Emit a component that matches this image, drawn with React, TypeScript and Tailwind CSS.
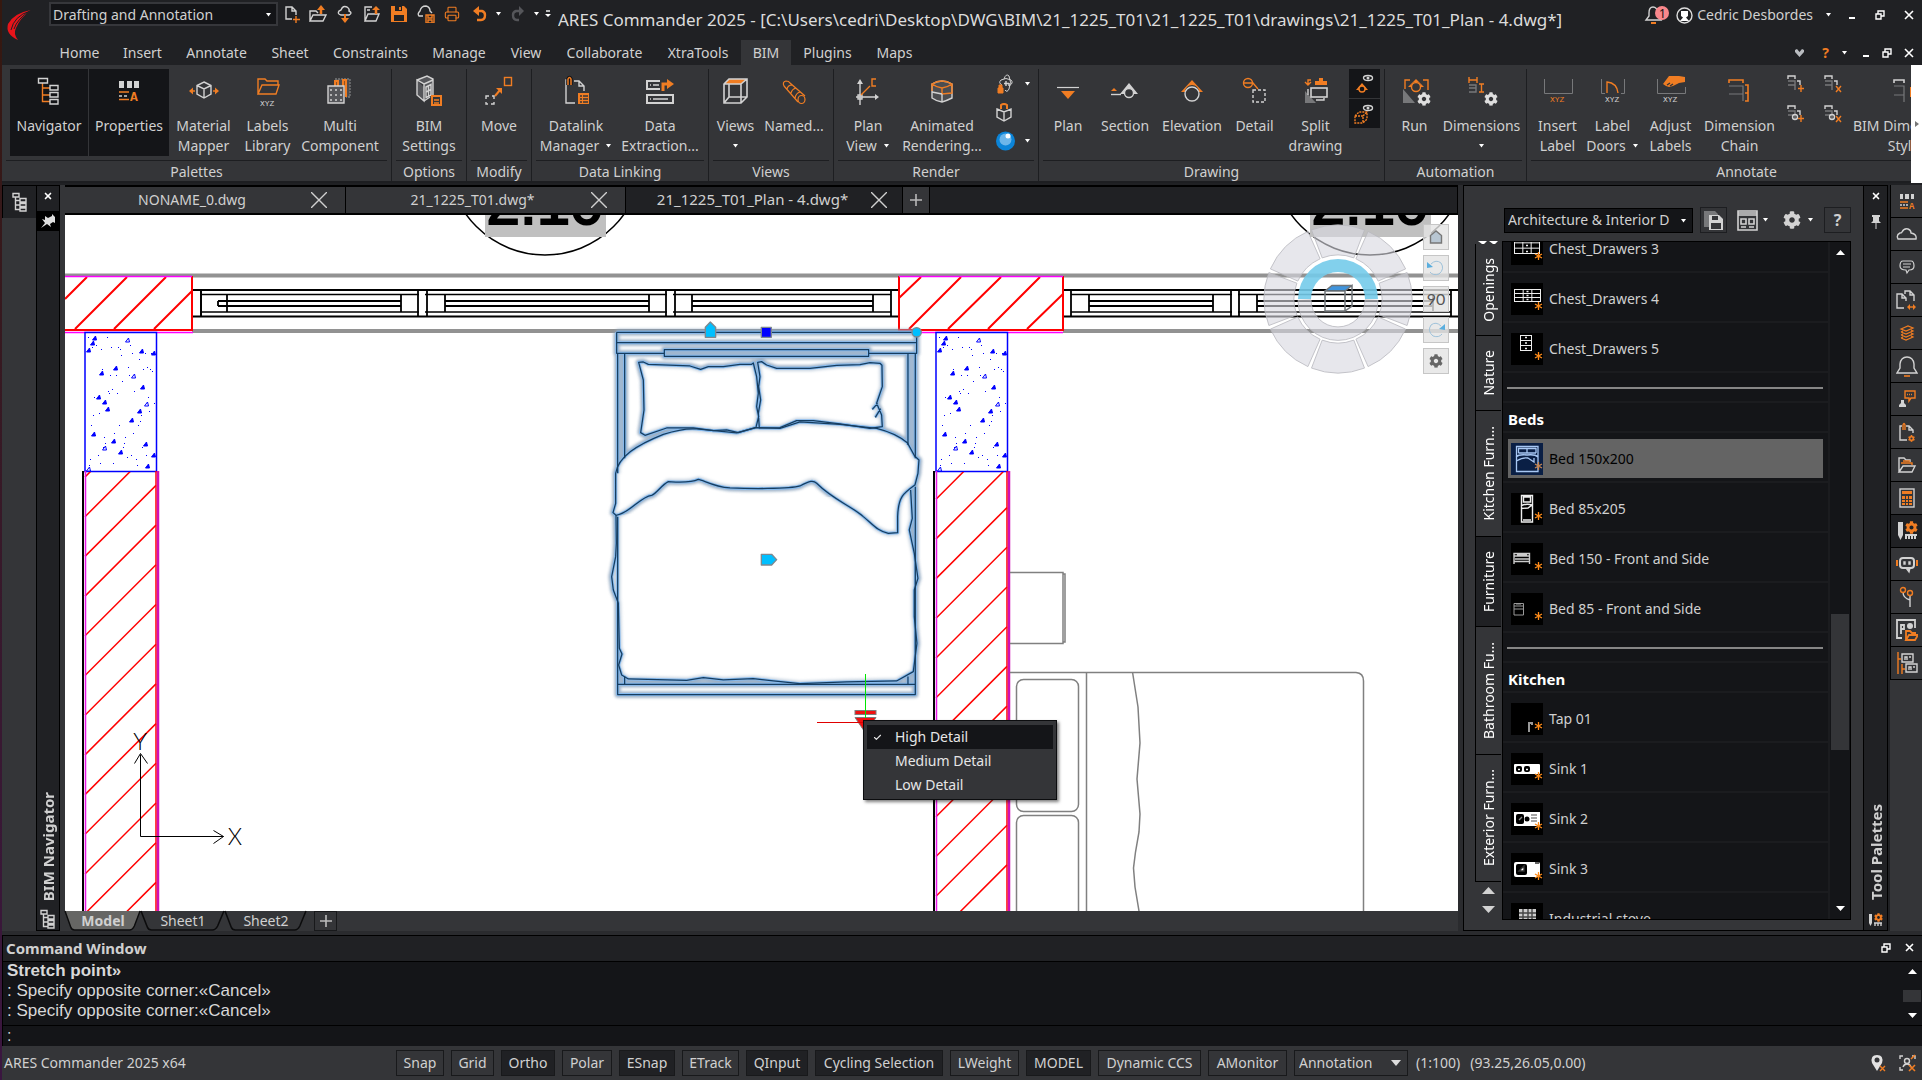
import type { ReactNode } from "react";
import { Check, Printer, X } from "lucide-react";
import { FaCog } from "react-icons/fa";

const OR = "#f07d23";
const LG = "#d2d2d2";
const DG = "#77787a";

interface SvgProps {
    children: ReactNode;
    w?: number;
    h?: number;
    className?: string;
}

function Svg({ children, w = 32, h = 32, className = "" }: SvgProps) {
    return (
        <svg width={w} height={h} viewBox={`0 0 ${w} ${h}`} fill="none" strokeWidth={1.4} className={`shrink-0 ${className}`} aria-hidden="true">
            {children}
        </svg>
    );
}

function Caret() {
    return (
        <Svg w={7} h={4}>
            <path d="M1 0H6L3.5 3.500Z" fill="#fff" />
        </Svg>
    );
}

/* ---------- ribbon icons ---------- */

const navigatorIcon = (
    <Svg>
        <path d="M9.500 8V26.500H17M9.500 13H17M9.500 20H17" stroke={OR} />
        <path d="M5.500 3.500H14.500V8H5.500ZM17 10.500H25V15H17ZM17 17.500H25V22H17ZM17 24.500H25V29H17Z" stroke={LG} />
    </Svg>
);

const propertiesIcon = (
    <Svg>
        <path d="M6 6H11V13H6ZM14 6H19V13H14ZM21 6H26V13H21Z" fill={LG} />
        <path d="M6 17H16M6 24.5H16" stroke={OR} />
        <path d="M6 21H16" stroke={LG} strokeDasharray="3 2" />
        <text x="17" y="26" fill={OR} fontSize="13" fontWeight="700" fontFamily="Liberation Mono">A</text>
    </Svg>
);

const materialIcon = (
    <Svg>
        <path d="M16 7L23 10.5V19L16 23L9 19V10.5ZM9 10.5L16 14L23 10.5M16 14V23" stroke={LG} />
        <path d="M7 16H3M25 16H29" stroke={OR} strokeWidth={1.6} />
        <path d="M5 12.500V19.500L1 16ZM27 12.500V19.500L31 16Z" fill={OR} />
    </Svg>
);

const labelsIcon = (
    <Svg>
        <path d="M6 19V4H13L15 6H26V10M6 19L10 10H27L24 19Z" stroke={OR} />
        <text x="8" y="31" fill={LG} fontSize="8" fontFamily="Liberation Mono">XYZ</text>
    </Svg>
);

const multiIcon = (
    <Svg>
        <path d="M11 4H26V22H22" stroke={DG} fill="#4b4c4f" strokeDasharray="2 1" />
        <path d="M11 11V6H14V11M19 11V5H22V22" stroke={OR} fill="#8d5427" strokeWidth={2} />
        <path d="M4 11H20V28H4Z" fill="#55565a" stroke={LG} />
        <path d="M6 15H19M6 20H19M6 25H19" stroke={LG} strokeDasharray="2 3" />
    </Svg>
);

const bimIcon = (
    <Svg>
        <path d="M4 5L14 1L20 4V22M4 5V20L11 26V9ZM11 9L20 5M11 26L17 22" stroke={LG} fill="#55565a" />
        <path d="M13 12L18 9.500V20L13 22.500ZM15.500 11V21M13 17L18 14.500" stroke={LG} />
        <rect x="19" y="21" width="9" height="9" stroke={OR} strokeWidth={2} fill="#343538" />
        <path d="M21 25H26M21 28H26" stroke={OR} />
    </Svg>
);

const moveIcon = (
    <Svg>
        <rect x="21.500" y="2.500" width="7" height="8" stroke={OR} />
        <path d="M12 21L17 15" stroke={OR} strokeWidth={2} />
        <path d="M13 13H19V19Z" fill={OR} />
        <path d="M3 24V21H6M9 21H11V24M11 27V29H8M5 29H3V27" stroke={LG} />
    </Svg>
);

const datalinkIcon = (
    <Svg>
        <path d="M10 6V5H6V28H15M14 6H19L24 11V16M19 6V11H24" stroke={LG} />
        <path d="M8 10V4Q9.500 1 11 4V10" stroke="#141518" strokeWidth={3.5} />
        <path d="M8 10V4Q9.500 1 11 4V10" stroke={OR} strokeWidth={1.5} />
        <path d="M18 18H29V29H18Z" fill={OR} />
        <path d="M20 21H22M23 21H28M20 24H22M23 24H28M20 27H22M23 27H28" stroke="#343538" />
    </Svg>
);

const extractionIcon = (
    <Svg>
        <path d="M16 6H3V14H16M3 20H29V28H3Z" stroke={LG} strokeWidth={2} />
        <path d="M6 10H7M9 10H15M6 24H7M9 24H24" stroke={LG} />
        <path d="M19 16V9H24" stroke={OR} strokeWidth={3} />
        <path d="M23 4L30 9L23 14Z" fill={OR} />
    </Svg>
);

const viewsIcon = (
    <Svg>
        <path d="M4 9L9 4H27L21 9Z" fill={OR} />
        <path d="M4 9L9 4H27V22L21 28H4ZM4 9H21V28M21 9L27 4M9 9V22H27M9 22L4 28" stroke={LG} strokeWidth={1.6} />
    </Svg>
);

const namedIcon = (
    <Svg>
        <path d="M6 11Q4 7 8 6Q11 6 12 8L27 21M6 11L20 27M9 14Q10 10 14 10M13 18Q14 14 18 13M17 23Q18 18 22 17" stroke={OR} strokeWidth={1.2} />
        <ellipse cx="23.500" cy="24.500" rx="3.500" ry="4" stroke={OR} strokeWidth={1.200} />
    </Svg>
);

const planViewIcon = (
    <Svg>
        <path d="M8 26V8M4 22H23M6 20H10V24H6ZM8 26V30" stroke={LG} />
        <path d="M5 9L8 4L11 9ZM23 19V25L27 22Z" fill={LG} />
        <path d="M9 20L18 11M24 4H20V11H24" stroke={OR} />
    </Svg>
);

const animatedIcon = (
    <Svg>
        <path d="M6 9Q16 3 26 9V23Q20 26 16 27Q10 26 6 23Z" stroke={LG} fill="#4c4d50" />
        <path d="M6 9Q16 3 26 9V18L16 19V13Q10 12 6 9ZM16 13Q22 12 26 9M6 9V16" stroke={OR} />
        <path d="M16 19V27M6 17L16 19" stroke={LG} />
    </Svg>
);

const planIcon = (
    <Svg>
        <path d="M5 12.5H27" stroke={LG} strokeWidth={1.2} />
        <path d="M9 16H23L16 24Z" fill={OR} />
    </Svg>
);

const sectionIcon = (
    <Svg>
        <path d="M2 16H8L5 13Z" fill={OR} />
        <path d="M2 19.500H12" stroke={LG} />
        <path d="M11 19L20 8L29 19H25A5 5 0 0 0 15 19Z" fill={LG} />
        <circle cx="20" cy="18" r="4.5" stroke={LG} fill="#343538" />
    </Svg>
);

const elevationIcon = (
    <Svg>
        <path d="M5 17L16 5L27 17H23A7 7 0 0 0 9 17Z" fill={OR} />
        <circle cx="16" cy="19" r="7" stroke={LG} fill="#343538" />
    </Svg>
);

const detailIcon = (
    <Svg>
        <circle cx="9" cy="8" r="4.5" stroke={OR} />
        <path d="M5 8H14L19 14" stroke={OR} />
        <rect x="14" y="15" width="12" height="12" stroke={LG} strokeDasharray="3 2" />
    </Svg>
);

const splitIcon = (
    <Svg>
        <path d="M14 6H19V3H23V6H27V10H15V6Z" fill={OR} />
        <path d="M11 5H8V9M5 7L8 10L11 7" stroke={OR} />
        <path d="M5 28V16L16 28Z" fill={DG} />
        <rect x="11" y="13" width="16" height="9" stroke={LG} strokeWidth={1.6} fill="#343538" />
        <path d="M8 14V20M16 25H24V23" stroke={LG} />
    </Svg>
);

const runIcon = (
    <Svg>
        <path d="M6 14V5H11M24 5H29V15" stroke={OR} />
        <path d="M9 12L17 4L25 12H22A5 5 0 0 0 12 12Z" fill={OR} />
        <circle cx="17" cy="12" r="4.5" stroke={OR} fill="#343538" />
        <path d="M4 28V14L16 28Z" fill={DG} />
        <FaCog x={18} y={17} size={14} color="#dedede" />
    </Svg>
);

const dimensionsIcon = (
    <Svg>
        <path d="M3 2V8M11 2V8M3 5H11M13 9H18M13 17H18M15.500 9V17" stroke={OR} />
        <path d="M3 10H10V17H3M3 13H10" stroke={DG} />
        <FaCog x={18} y={17} size={14} color="#dedede" />
    </Svg>
);

const insertLabelIcon = (
    <Svg>
        <path d="M2.500 4V18.500H30.500V4" stroke={DG} strokeWidth={1} />
        <text x="8" y="27" fill={OR} fontSize="8" fontFamily="Liberation Mono">XYZ</text>
    </Svg>
);

const labelDoorsIcon = (
    <Svg>
        <path d="M4.500 4V18.500H8M24 18.500H27.500V4" stroke={DG} strokeWidth={1} />
        <path d="M10 18V7Q20 8 21 18" stroke={OR} />
        <text x="8" y="27" fill={LG} fontSize="8" fontFamily="Liberation Mono">XYZ</text>
    </Svg>
);

const adjustIcon = (
    <Svg>
        <path d="M2.500 4V18.500H30.500V12" stroke={DG} strokeWidth={1} />
        <path d="M8 9L14 1H24L30 2V7L24 8L18 11L14 12L11 11Z" fill={OR} />
        <path d="M12 10L15 8M15 11L18 9" stroke="#343538" />
        <text x="8" y="27" fill={LG} fontSize="8" fontFamily="Liberation Mono">XYZ</text>
    </Svg>
);

const chainIcon = (
    <Svg>
        <path d="M5 8V5H19V8M21 10H24V26H21M21 18H24" stroke={OR} strokeWidth={1.6} />
        <path d="M5 11H19V26M5 19H19" stroke={DG} strokeWidth={1.2} />
    </Svg>
);

const dimStyleIcon = (
    <Svg>
        <path d="M6 8V5H16V8" stroke={LG} strokeWidth={1.6} />
        <path d="M6 11H16V27M6 20H16" stroke={DG} strokeWidth={1.2} />
        <path d="M22 12H26V22H22Z" fill={OR} />
    </Svg>
);

interface Tool {
    label: string[];
    icon: ReactNode;
    width: string;
    active?: boolean;
    caret?: boolean;
}

function RibbonButton({ label, icon, width, active, caret }: Tool) {
    return (
        <button className={`flex h-[87px] shrink-0 flex-col items-center pt-[6px] text-center leading-5 whitespace-nowrap ${width} ${active ? "bg-[#141518]" : ""}`}>
            {icon}
            <span className="mt-[9px]">{label[0]}</span>
            <span className="flex h-5 items-center gap-[6px]">
                {label[1]}
                {caret && <Caret />}
            </span>
        </button>
    );
}

function Group({ title, className = "", children }: { title: string; className?: string; children: ReactNode }) {
    return (
        <section className={`flex shrink-0 flex-col pt-1 ${className}`}>
            <div className="flex h-[112px] flex-col border-r border-[#1d1e21] px-1">
                <div className="flex h-[87px] items-start justify-center">{children}</div>
                <div className="mt-1 border-t border-[#1d1e21] text-center leading-[22px]">{title}</div>
            </div>
        </section>
    );
}

const addDims = (cross: boolean, circle: boolean) => (
    <Svg w={18} h={18}>
        <path d="M1 4V1H8V4M10 6H13V10" stroke={LG} />
        <path d="M1 6H8V15M1 10H8" stroke={DG} />
        {circle && <circle cx="8" cy="12" r="2.500" stroke={LG} />}
        <path d={cross ? "M12 11L17 17M17 11L12 17" : "M14 10V17M11 13.500H17"} stroke={OR} />
    </Svg>
);

const eye = (
    <>
        <ellipse cx="19" cy="9" rx="4.500" ry="2.500" stroke={LG} />
        <circle cx="19" cy="9" r="1.500" fill={LG} />
    </>
);

function Ribbon() {
    return (
        <div className="flex h-[118px] shrink-0">
            <div className="flex min-w-0 flex-1 overflow-hidden border-b-2 border-[#1d1e21] bg-[#343538]">
                <Group title="Palettes" className="w-[390px]">
                    <RibbonButton label={["Navigator"]} icon={navigatorIcon} width="w-[78px] mr-px" active />
                    <RibbonButton label={["Properties"]} icon={propertiesIcon} width="w-[80px]" active />
                    <RibbonButton label={["Material", "Mapper"]} icon={materialIcon} width="w-[69px]" />
                    <RibbonButton label={["Labels", "Library"]} icon={labelsIcon} width="w-[59px]" />
                    <RibbonButton label={["Multi", "Component"]} icon={multiIcon} width="w-[86px]" />
                </Group>
                <Group title="Options" className="w-[75px]">
                    <RibbonButton label={["BIM", "Settings"]} icon={bimIcon} width="w-[67px]" />
                </Group>
                <Group title="Modify" className="w-[65px]">
                    <RibbonButton label={["Move"]} icon={moveIcon} width="w-[60px]" />
                </Group>
                <Group title="Data Linking" className="w-[177px]">
                    <RibbonButton label={["Datalink", "Manager"]} icon={datalinkIcon} width="w-[80px]" caret />
                    <RibbonButton label={["Data", "Extraction..."]} icon={extractionIcon} width="w-[88px]" />
                </Group>
                <Group title="Views" className="w-[125px]">
                    <RibbonButton label={["Views"]} icon={viewsIcon} width="w-[46px]" caret />
                    <RibbonButton label={["Named..."]} icon={namedIcon} width="w-[71px]" />
                </Group>
                <Group title="Render" className="w-[205px]">
                    <RibbonButton label={["Plan", "View"]} icon={planViewIcon} width="w-[60px]" caret />
                    <RibbonButton label={["Animated", "Rendering..."]} icon={animatedIcon} width="w-[88px]" />
                    <div className="flex w-[48px] flex-col gap-2 pt-1 pl-[10px]">
                        <button className="flex items-center gap-2" aria-label="Orbit">
                            <Svg w={20} h={22}>
                                <path d="M6 12Q2 10 5 7Q10 4 15 7Q18 10 13 13M8 6Q10 0 13 3Q16 9 13 16Q11 20 9 17" stroke={LG} strokeWidth={1} />
                                <path d="M10 8V13M8 10.500H13M13 10V13" stroke={LG} />
                                <path d="M2 15H7V20H2ZM3 15V12H6V15" fill={OR} stroke={OR} strokeWidth={1} />
                            </Svg>
                            <Caret />
                        </button>
                        <button aria-label="Box">
                            <Svg w={20} h={20}>
                                <path d="M1 6L8 9L15 6V14L8 18L1 14ZM8 9V18" stroke={LG} />
                                <path d="M5 6V2Q8 0 11 2V6" stroke={OR} strokeWidth={2} />
                            </Svg>
                        </button>
                        <button className="flex items-center gap-2" aria-label="Render">
                            <Svg w={20} h={20}>
                                <circle cx="9.500" cy="10" r="9.500" fill="#0b84d8" />
                                <circle cx="9.500" cy="8.500" r="6" fill="#6cb6ea" />
                                <circle cx="12" cy="5" r="2.500" fill="#fff" />
                            </Svg>
                            <Caret />
                        </button>
                    </div>
                </Group>
                <Group title="Drawing" className="w-[346px]">
                    <RibbonButton label={["Plan"]} icon={planIcon} width="w-[50px]" />
                    <RibbonButton label={["Section"]} icon={sectionIcon} width="w-[64px]" />
                    <RibbonButton label={["Elevation"]} icon={elevationIcon} width="w-[70px]" />
                    <RibbonButton label={["Detail"]} icon={detailIcon} width="w-[55px]" />
                    <RibbonButton label={["Split", "drawing"]} icon={splitIcon} width="w-[67px]" />
                    <div className="flex flex-col gap-px">
                        <button className="bg-[#141518]" aria-label="Show marks">
                            <Svg w={31} h={29}>
                                {eye}
                                <path d="M7 21L13 14L19 21H16A3 3 0 0 0 10 21Z" fill={OR} />
                                <circle cx="13" cy="20" r="3" stroke={OR} fill="#141518" />
                            </Svg>
                        </button>
                        <button className="bg-[#141518]" aria-label="Show boxes">
                            <Svg w={31} h={29}>
                                {eye}
                                <path d="M6 17L10 13H18V20L14 24H6ZM6 17H14V24M14 17L18 13" stroke={OR} strokeDasharray="2 1" />
                            </Svg>
                        </button>
                    </div>
                </Group>
                <Group title="Automation" className="w-[142px]">
                    <RibbonButton label={["Run"]} icon={runIcon} width="w-[52px]" />
                    <RibbonButton label={["Dimensions"]} icon={dimensionsIcon} width="w-[82px]" caret />
                </Group>
                <Group title="Annotate" className="w-[440px]">
                    <RibbonButton label={["Insert", "Label"]} icon={insertLabelIcon} width="w-[50px]" />
                    <RibbonButton label={["Label", "Doors"]} icon={labelDoorsIcon} width="w-[60px]" caret />
                    <RibbonButton label={["Adjust", "Labels"]} icon={adjustIcon} width="w-[56px]" />
                    <RibbonButton label={["Dimension", "Chain"]} icon={chainIcon} width="w-[82px]" />
                    <div className="grid w-[66px] grid-cols-2 gap-x-[14px] gap-y-3 pt-[6px] pl-[6px]">
                        <button aria-label="Add dimension">{addDims(false, false)}</button>
                        <button aria-label="Remove dimension">{addDims(true, false)}</button>
                        <button aria-label="Add point">{addDims(false, true)}</button>
                        <button aria-label="Remove point">{addDims(true, true)}</button>
                    </div>
                    <RibbonButton label={["BIM Dimension", "Style"]} icon={dimStyleIcon} width="w-[114px]" />
                </Group>
            </div>
            <button className="flex w-[11px] items-center justify-center bg-white" aria-label="More">
                <Svg w={4} h={6}>
                    <path d="M0 0L4 3L0 6Z" fill="#777" />
                </Svg>
            </button>
        </div>
    );
}

/* ---------- title bar ---------- */

function WindowButtons({ gap }: { gap: string }) {
    return (
        <div className={`flex items-center ${gap}`}>
            <button aria-label="Minimize">
                <Svg w={8} h={12}><path d="M1 9H7" stroke="#fff" strokeWidth={2} /></Svg>
            </button>
            <button aria-label="Restore">
                <Svg w={10} h={10}><path d="M1 4H6V9H1ZM3 4V1H9V6H6" stroke="#fff" /></Svg>
            </button>
            <button aria-label="Close">
                <Svg w={10} h={10}><path d="M1 1L9 9M9 1L1 9" stroke="#fff" strokeWidth={1.6} /></Svg>
            </button>
        </div>
    );
}

const menus = [
    { name: "Home", width: "w-[63px]" },
    { name: "Insert", width: "w-[63px]" },
    { name: "Annotate", width: "w-[85px]" },
    { name: "Sheet", width: "w-[62px]" },
    { name: "Constraints", width: "w-[99px]" },
    { name: "Manage", width: "w-[78px]" },
    { name: "View", width: "w-[56px]" },
    { name: "Collaborate", width: "w-[101px]" },
    { name: "XtraTools", width: "w-[86px]" },
    { name: "BIM", width: "w-[50px]" },
    { name: "Plugins", width: "w-[73px]" },
    { name: "Maps", width: "w-[61px]" },
];

function TitleBar() {
    return (
        <header className="flex h-[65px] shrink-0">
            <Svg w={46} h={48}>
                <path d="M29 10Q12 13 6 24Q3 34 16 40Q11 34 14 28Q18 18 29 10Z" fill="#e8141a" />
                <path d="M29 10Q15 19 12 29M28 11Q12 16 9 30" stroke="#202124" strokeWidth={1} />
            </Svg>
            <div className="flex min-w-0 flex-1 flex-col">
                <div className="flex h-10 items-start pr-2">
                    <div className="relative mt-[2px] ml-px">
                        <select aria-label="Workspace" className="h-6 w-[229px] appearance-none border-2 border-[#36373b] bg-[#131417] pt-px pl-[2px]">
                            <option>Drafting and Annotation</option>
                        </select>
                        <div className="pointer-events-none absolute top-[11px] right-[6px]"><Caret /></div>
                    </div>
                    <div className="mt-[5px] ml-[6px] flex h-[18px] items-center gap-[9px]">
                        <button aria-label="New"><Svg w={16} h={18}><path d="M8 14H2V2H8L12 6V10M8 2V6H12" stroke={LG} /><path d="M12 11V18M9 14.500H16" stroke={OR} /></Svg></button>
                        <button aria-label="Open"><Svg w={18} h={18}><path d="M1 16V6H7L9 8M1 16L4 10H17L14 16Z" stroke={LG} /><path d="M12 9V4" stroke={OR} strokeWidth={2.5} /><path d="M8 5L12 0L16 5Z" fill={OR} /></Svg></button>
                        <button aria-label="Open from cloud"><Svg w={18} h={18}><path d="M5 10Q1 9 3 6Q5 5 5 5Q7 0 11 2Q14 4 13 6Q17 8 13 10Z" stroke={LG} /><path d="M9 9V13" stroke={OR} strokeWidth={2} /><path d="M5 13H13L9 18Z" fill={OR} /></Svg></button>
                        <button aria-label="Publish"><Svg w={18} h={18}><path d="M2 16V2H9M2 16L5 9H16L13 16ZM4 5H7" stroke={LG} /><path d="M13 9V4" stroke={OR} strokeWidth={2.5} /><path d="M9 5L13 1L17 5Z" fill={OR} /></Svg></button>
                        <button aria-label="Save"><Svg w={18} h={18}><path d="M1 1H14L17 4V17H1Z" fill={OR} /><path d="M5 1H12V6H5ZM4 10H14V16H4Z" fill="#202124" /><path d="M10 2V5" stroke={OR} strokeWidth={2} /></Svg></button>
                        <button aria-label="Save to cloud"><Svg w={18} h={18}><path d="M6 11H2Q0 9 3 6Q4 1 9 1Q13 2 13 6L15 8" stroke={LG} /><path d="M9 10H17V18H9Z" stroke={OR} /><path d="M11 10V13H15V10M11 18V15H15V18" stroke={OR} /></Svg></button>
                        <button aria-label="Print"><Printer size={16} color={OR} strokeWidth={1.6} /></button>
                        <button aria-label="Undo" className="ml-1 flex items-center gap-2"><Svg w={14} h={16}><path d="M4 5H9Q12 6 12 9Q12 14 8 14H4" stroke={OR} strokeWidth={2.4} /><path d="M0 5L6 0V10Z" fill={OR} /></Svg><Caret /></button>
                        <button aria-label="Redo" className="flex items-center gap-2"><Svg w={14} h={16}><path d="M9 5H5Q2 6 2 9Q2 14 6 14H8" stroke="#55565a" strokeWidth={2.4} /><path d="M13 5L8 0V10Z" fill="#55565a" /></Svg><Caret /></button>
                        <button aria-label="Customize" className="-ml-1"><Svg w={6} h={8}><path d="M1 1H5" stroke="#fff" /><path d="M0 4H6L3 7Z" fill="#fff" /></Svg></button>
                    </div>
                    <h1 className="ml-[7px] min-w-0 flex-1 truncate text-[17px] leading-10 text-[#dcdcdc]">
                        ARES Commander 2025 - [C:\Users\cedri\Desktop\DWG\BIM\21_1225_T01\21_1225_T01\drawings\21_1225_T01_Plan - 4.dwg*]
                    </h1>
                    <div className="mt-px flex h-7 shrink-0 items-center">
                        <button className="relative mr-1 w-7" aria-label="Notifications">
                            <Svg w={26} h={20}>
                                <path d="M2 15H17L14 11V8Q13 2 9 2Q5 2 5 8V11Z" stroke={LG} />
                                <path d="M7 18H12" stroke={OR} strokeWidth={2} />
                                <circle cx="18" cy="8" r="7" fill="#f9878c" />
                                <text x="15" y="13" fill="#111" fontSize="12">1</text>
                            </Svg>
                        </button>
                        <button className="flex items-center gap-1">
                            <Svg w={17} h={17}>
                                <circle cx="8.500" cy="8.500" r="7.500" stroke="#ddd" />
                                <path d="M5 4H12V9L10 10.500L13 14H4L7 10.500L5 9Z" fill="#fff" />
                            </Svg>
                            Cedric Desbordes
                            <span className="mr-4 ml-2"><Caret /></span>
                        </button>
                        <WindowButtons gap="gap-[19px]" />
                    </div>
                </div>
                <div className="flex h-[25px] items-center pr-2">
                    <nav className="flex h-full flex-1">
                        {menus.map((menu) => (
                            <a key={menu.name} href="#" className={`text-center leading-[26px] ${menu.width} ${menu.name === "BIM" ? "bg-[#343538]" : ""}`}>
                                {menu.name}
                            </a>
                        ))}
                    </nav>
                    <button aria-label="Collapse" className="mr-[18px]"><Svg w={9} h={8}><path d="M0 1L2 0L4.500 3L7 0L9 1V3L4.500 8L0 3Z" fill="#b9bcc0" /></Svg></button>
                    <button aria-label="Help" className="mr-[14px] flex items-center gap-3 font-bold text-[#f07d23]">?<Caret /></button>
                    <WindowButtons gap="gap-3" />
                </div>
            </div>
        </header>
    );
}

/* ---------- drawing area ---------- */

const hatchLeft = Array.from({ length: 13 }, (_, i) => 477 + i * 39.7);
const hatchRight = Array.from({ length: 13 }, (_, i) => 459.5 + i * 39.7);

// aggregate of the concrete fill, relative to the top-left corner of the column
const stones = [
    [9, 7], [7, 12], [3, 19], [42, 9], [56, 20], [68, 22], [30, 37], [16, 42], [48, 45], [57, 56],
    [13, 66], [19, 71], [22, 78], [61, 73], [54, 80], [46, 89], [8, 103], [28, 110], [19, 117], [35, 121],
    [60, 113], [68, 124], [62, 135], [3, 138],
];
const grit = Array.from({ length: 60 }, (_, i) => [3 + ((i * 29) % 67), 4 + ((i * 53 + i * i * 3) % 132)]);

function Column({ x }: { x: number }) {
    return (
        <g>
            <rect x={x} y="332.500" width="71.500" height="139" fill="#fff" stroke="#0000ff" strokeWidth="1.500" />
            {stones.map(([sx, sy], i) => (
                <path key={i} d={`M${x + sx - 1.5} ${332 + sy + 1}h4l-1 -4z`} fill={i % 5 === 3 ? "#fff" : "#0000ff"} stroke="#0000ff" />
            ))}
            {grit.map(([gx, gy], i) => (
                <rect key={i} x={x + gx} y={333 + gy} width="1" height="1" fill="#0000ff" />
            ))}
        </g>
    );
}

function Wall({ x, lines }: { x: number; lines: number[] }) {
    return (
        <g>
            {lines.map((y) => (
                <path key={y} d={`M${x + 2} ${y}l71 -71`} stroke="#ff0000" strokeWidth="1.500" clipPath="url(#walls)" />
            ))}
            <path d={`M${x} 471V911`} stroke="#000" strokeWidth="2" />
            <path d={`M${x + 2.5} 471V911`} stroke="#e818e8" strokeWidth="1.500" />
            <path d={`M${x + 73} 471V911`} stroke="#ff0000" strokeWidth="1.500" />
            <path d={`M${x + 75} 471V911`} stroke="#d010b8" strokeWidth="2.500" />
        </g>
    );
}

// [frame start, sash start, sash end, frame end]
const sashes = [
    [201, 227, 401, 418],
    [427, 445, 649, 666],
    [675, 692, 873, 891],
    [1071, 1089, 1213, 1231],
    [1239, 1257, 1433, 1451],
];

const bedFrame = "M110 397H1010V460H866M253 460H110ZM110 397V460M110 428H1010M253 449H866V469H253ZM113 460V820M134 460V775M984 460V735M1006 460V775M113 950V1484H1006V860M113 1453H1006M134 1430V1453M984 1430V1453";
const bedPillows = "M176 487L190 486L205 493L330 498L362 508L385 500L430 500L480 493L515 493L520 489L530 530L535 580L530 620L536 650L528 682L475 698L440 690L400 692L340 684L260 684L195 706L182 698L192 630L190 540ZM533 487L545 485L560 495L590 505L690 505L770 496L840 494L870 488L900 490L906 496L907 560L890 610L905 645L907 680L870 685L780 672L700 662L650 662L600 683L538 684L535 640L542 600L536 560L540 530ZM877 628L893 610M886 652L902 626";
// left open at the top, where the duvet lies over it
const bedMattress = "M108 946L109 1030L107 1070L95 1130L100 1170L115 1210L118 1345L126 1362L116 1395L125 1425L145 1437L320 1441L370 1433L430 1440L520 1436L580 1443L660 1451L800 1446L950 1443L1000 1415L1011 1330L1003 1250L1003 1170L1014 1135L1003 1060L988 990L997 955L992 870";
const bedDuvet = "M108 946L99 938L107 910L107 820C115 770 170 735 250 703C300 687 330 685 350 687L470 699L528 683L600 685L660 666L780 673L890 685C930 695 960 710 982 728L1004 768L1017 780L1014 820L1005 855C970 880 955 890 953 950L953 998L925 1000C895 995 880 975 850 950C810 915 760 900 710 850C700 840 690 842 660 858C630 868 500 866 450 864C400 860 370 840 355 838C330 850 290 846 265 845C245 855 230 880 215 886C180 890 150 940 108 946Z";

function BedLines() {
    return (
        <>
            <path d={bedFrame} />
            <path d={bedPillows} />
            <path d={bedMattress} />
            <path d={bedDuvet} />
        </>
    );
}

function Bed() {
    return (
        <g transform="translate(580 200) scale(0.3333)" strokeLinejoin="round">
            <g stroke="#8aa3bd" strokeWidth="17" opacity="0.7" filter="url(#glow)"><BedLines /></g>
            <path d="M113 461H134V1453H113ZM984 461H1006V1453H984ZM253 449H866V469H253Z" fill="#a9c0d8" />
            <path d={bedMattress} fill="#fff" />
            <path d={bedPillows} fill="#fff" />
            <path d={bedDuvet} fill="#fff" />
            <g stroke="#8aa3bd" strokeWidth="16" opacity="0.5" filter="url(#glow)"><BedLines /></g>
            <g stroke="#86bbf0" strokeWidth="9"><BedLines /></g>
            <g stroke="#163d60" strokeWidth="3.800"><BedLines /></g>
            <g stroke="#7d8890" strokeWidth="4">
                <path d="M376 412V382L391 366L407 382V412Z" fill="#00bfff" />
                <path d="M544 382H574V412H544Z" fill="#0000ff" />
                <circle cx="1010" cy="397" r="14" fill="#00bfff" />
                <path d="M544 1063H575L590 1079L575 1095H544Z" fill="#00bfff" />
            </g>
        </g>
    );
}

function ringPart(r1: number, r2: number, from: number, to: number) {
    const point = (r: number, deg: number) => {
        const a = (deg * Math.PI) / 180;
        return `${(1338 + r * Math.cos(a)).toFixed(1)} ${(299 + r * Math.sin(a)).toFixed(1)}`;
    };
    return `M${point(r2, from)}A${r2} ${r2} 0 0 1 ${point(r2, to)}L${point(r1, to)}A${r1} ${r1} 0 0 0 ${point(r1, from)}Z`;
}

function Drawing() {
    return (
        <svg className="block h-full w-full" viewBox="65 215 1393 696" preserveAspectRatio="xMinYMin slice" fill="none" role="img" aria-label="Floor plan">
            <defs>
                <clipPath id="walls">
                    <path d="M65 472H1100V911H65Z" />
                </clipPath>
                <filter id="glow" x="-10%" y="-10%" width="120%" height="120%">
                    <feGaussianBlur stdDeviation="5" />
                </filter>
            </defs>
            <rect x="65" y="215" width="1393" height="696" fill="#fff" />

            {[545, 1370].map((cx) => (
                <g key={cx}>
                    <circle cx={cx} cy="158" r="97" stroke="#000" strokeWidth="1.500" />
                    <rect x={cx - 60} y="215" width="121" height="22" fill="#c0c0c0" />
                    <text x={cx} y="224" fontSize="60" textAnchor="middle" fill="#000" stroke="#000" strokeWidth="2" fontFamily="Liberation Sans">2.10</text>
                </g>
            ))}

            <path d="M65 275.500H1458M65 331H1458" stroke="#929292" strokeWidth="4" />
            <path d="M192 290H900M192 316.500H900M1063 290H1458M1063 316.500H1458" stroke="#000" strokeWidth="2" />
            <path d="M201 294.500H891M201 312H891M1071 294.500H1451M1071 312H1451" stroke="#000" strokeWidth="1.500" />
            <path d="M192 289V317M201 289V317M900 289V317M1063 289V317M218 301V306M218 301H227M218 306H227" stroke="#000" strokeWidth="1.800" />
            {sashes.map(([a, b, c, d]) => (
                <g key={a}>
                    <path d={`M${a} 289V317M${d} 289V317M${b} 294V312M${c} 294V312M${b} 301H${c}M${b} 306H${c}`} stroke="#000" strokeWidth="1.800" />
                    <path d={`M${d + 1} 293H${d + 7}V313H${d + 1}Z`} fill="#fff" />
                </g>
            ))}

            <path d="M65 276H192V332H65ZM899 276H1063V332H899Z" fill="#fff" />
            <path d="M65 299L87 277M75 329L127 277M114 329L166 277M154 329L192 291M899 298L921 277M909 329L961 277M948 329L1001 277M988 329L1040 277M1027 329L1063 294" stroke="#ff0000" strokeWidth="2" />
            <path d="M65 330H192V276M899 276V330H1063V276" stroke="#ff0000" strokeWidth="2" />
            <path d="M65 276.500H192M65 332.500H193M899 276.500H1063M899 332.500H1063" stroke="#ff00ff" strokeWidth="1.500" />

            <Column x={85} />
            <Column x={936} />
            <Wall x={83} lines={hatchLeft} />
            <Wall x={934} lines={hatchRight} />

            <g stroke="#808080" strokeWidth="1.500">
                <path d="M1010 572.500H1063V643.500H1010M1063 574H1065V642H1063" />
                <path d="M1010 672.500H1356Q1363.500 673 1363.500 681V911M1086.500 672V911" />
                <path d="M1132.500 672L1138 707L1140 743L1137 779L1140 814L1139 832L1135.500 852L1133.500 868L1135 887L1139 911" />
                <rect x="1016.500" y="679.500" width="62" height="132" rx="7" />
                <rect x="1016.500" y="815.500" width="62" height="132" rx="7" />
            </g>

            <Bed />

            <path d="M140 754V836H223M134 763L140 753L147 763M213 830L223 836L213 843" stroke="#000" transform="translate(0.500 0.500)" />
            <text x="140" y="750" fontSize="23" textAnchor="middle" fill="#000" fontFamily="Lato" fontWeight="300">Y</text>
            <text x="235" y="845" fontSize="23" textAnchor="middle" fill="#000" fontFamily="Lato" fontWeight="300">X</text>

            <g stroke="#7d7d7d">
                <rect x="855" y="710.500" width="21" height="4" fill="#f01010" />
                <path d="M855 717.500H876L865.500 733Z" fill="#f01010" />
            </g>
            <path d="M865.500 674V718" stroke="#00e600" />
            <path d="M817 722.500H864" stroke="#e00000" />

            <g stroke="#b8b8be" fill="#d8d8e0" fillOpacity="0.620" strokeWidth="0.800">
                {[0, 45, 90, 135, 180, 225, 270, 315].map((a) => (
                    <path key={a} d={ringPart(44, 74, a - 21, a + 21)} />
                ))}
                <path d={ringPart(27, 40, 2, 178)} />
            </g>
            <path d={ringPart(27, 40, 180, 360)} fill="#74cbea" fillOpacity="0.900" />
            <path d="M1326 290.500L1332 285.500H1352L1345 290.500Z" fill="#3e93dc" />
            <path d="M1325 291H1345V311H1325ZM1345 291L1352 285.500V306L1345 311M1325 291L1332 285.500H1352" stroke="#6f7478" strokeWidth="1.500" />
        </svg>
    );
}

function Canvas() {
    const button = "flex h-[26px] w-[26px] items-center justify-center border border-[#c6c6c6] bg-[#e4e4e4]/80";
    return (
        <div className="relative min-h-0 flex-1 overflow-hidden bg-white">
            <Drawing />
            <div className="absolute top-[9px] right-[9px] flex flex-col gap-[5px]">
                <button className={button} aria-label="Home view">
                    <Svg w={16} h={16}><path d="M2.500 14V6.500L8 2L13.500 6.500V14Z" fill="#b8c6d2" stroke="#777" /></Svg>
                </button>
                <button className={button} aria-label="Rotate left">
                    <Svg w={18} h={18}><path d="M4 5Q9 0 14 4Q18 10 12 15Q6 17 3 13" stroke="#9fc2da" strokeWidth={1} /><path d="M0 3V9L6 8Z" fill="#5aaede" /></Svg>
                </button>
                <div className={`${button} font-[Lato] text-base text-[#555]`}>90</div>
                <button className={button} aria-label="Rotate right">
                    <Svg w={18} h={18}><path d="M14 5Q9 0 4 4Q0 10 6 15Q12 17 15 13" stroke="#9fc2da" strokeWidth={1} /><path d="M18 3V9L12 8Z" fill="#5aaede" /></Svg>
                </button>
                <button className={button} aria-label="View settings">
                    <FaCog size={14} color="#666" />
                </button>
            </div>
            <ul role="menu" className="absolute top-[505px] left-[798px] w-[194px] border border-[#0c0d0f] bg-[#343538] px-[3px] pt-1 pb-[2px] leading-6 text-[#e6e6e6] shadow-[2px_2px_3px_rgba(0,0,0,0.5)]">
                {["High Detail", "Medium Detail", "Low Detail"].map((item, i) => (
                    <li key={item} role="menuitem" className={`flex h-6 items-center ${i === 0 ? "bg-[#141518]" : ""}`}>
                        <span className="flex w-7 pl-[6px]">{i === 0 && <Check size={9} strokeWidth={3} />}</span>
                        {item}
                    </li>
                ))}
            </ul>
        </div>
    );
}

const docs = [
    { name: "NONAME_0.dwg", width: "w-[281px]", active: false },
    { name: "21_1225_T01.dwg*", width: "w-[280px]", active: false },
    { name: "21_1225_T01_Plan - 4.dwg*", width: "w-[277px]", active: true },
];

const sheets = [
    { name: "Model", width: "w-[76px]" },
    { name: "Sheet1", width: "w-[84px]" },
    { name: "Sheet2", width: "w-[82px]" },
];

function Documents() {
    return (
        <main className="flex min-w-0 flex-1 flex-col">
            <div className="flex h-[30px] shrink-0 border-y-2 border-r border-black bg-[#202124]">
                {docs.map((doc) => (
                    <div key={doc.name} className={`flex items-center border-r border-black ${doc.width} ${doc.active ? "bg-[#202124] pr-[15px] text-[15px]" : "bg-[#343538] pr-[18px]"}`}>
                        <button className="flex-1 pl-2 text-center">{doc.name}</button>
                        <button aria-label="Close tab">
                            <Svg w={16} h={16}><path d="M0 0L16 16M16 0L0 16" stroke="#cfcfcf" /></Svg>
                        </button>
                    </div>
                ))}
                <button className="flex w-[27px] items-center justify-center border-r border-black bg-[#343538]" aria-label="New tab">
                    <Svg w={12} h={12}><path d="M6 0V12M0 6H12" stroke="#b8b8b8" strokeWidth={1.6} /></Svg>
                </button>
            </div>
            <Canvas />
            <div className="flex h-5 shrink-0 items-center bg-[#343538]">
                {sheets.map((sheet, i) => (
                    <button key={sheet.name} className={`relative h-5 ${sheet.width} ${i === 0 ? "font-bold" : ""}`}>
                        <svg className="absolute inset-0 h-full w-full overflow-visible" viewBox="0 0 80 20" preserveAspectRatio="none" aria-hidden="true">
                            <path d="M0 0L6 16Q7 19 10 19H68Q71 19 73 15L79 0" fill={i === 0 ? "#666664" : "#343538"} stroke="#0b0b0c" strokeWidth="1.500" />
                        </svg>
                        <span className="relative">{sheet.name}</span>
                    </button>
                ))}
                <button className="ml-[7px] flex h-5 w-[23px] items-center justify-center border border-[#18191b]" aria-label="Add sheet">
                    <Svg w={12} h={12}><path d="M6 0V12M0 6H12" stroke="#bcbcbc" strokeWidth={1.6} /></Svg>
                </button>
            </div>
        </main>
    );
}

/* ---------- side panels ---------- */

const treeIcon = (
    <Svg w={16} h={20}>
        <path d="M1 1.500H7V5H1ZM8 6.500H14V10H8ZM8 11.500H14V14.500H8ZM8 16H14V19H8ZM3.500 5V17.500H8M3.500 8.500H8M3.500 13H8" stroke={LG} />
    </Svg>
);

function NavigatorPanel() {
    return (
        <aside className="flex shrink-0 bg-[#343538] pr-[5px]">
            <div className="w-[34px]">
                <button className="flex h-[33px] w-[34px] items-center justify-center border-t border-l border-black bg-[#202124]" aria-label="Navigator">{treeIcon}</button>
            </div>
            <div className="flex w-6 flex-col items-center border border-black bg-[#202124]">
                <button className="flex h-5 items-center" aria-label="Close"><X size={10} strokeWidth={4} color="#fff" /></button>
                <button className="mt-[5px] flex h-5 w-full items-center justify-center bg-black" aria-label="Pin">
                    <Svg w={16} h={16}><path d="M5 3L8 5L12 3L12 1L15 4L15 10L13 9L10 11L11 14L7 11L1 15L5 10L2 6L5 7Z" fill="#e0e0e0" /></Svg>
                </button>
                <div className="flex-1" />
                <h2 className="rotate-180 text-[15px] leading-5 font-bold [writing-mode:vertical-rl]">BIM Navigator</h2>
                <div className="mt-2 mb-px">{treeIcon}</div>
            </div>
        </aside>
    );
}

const chest = (cols: number, x: number, y: number, w: number, h: number) => (
    <g stroke="#eee" strokeWidth={1}>
        <rect x={x} y={y} width={w} height={h} />
        <path d={`M${x} ${y + h / 3}h${w}M${x} ${y + (2 * h) / 3}h${w}`} />
        {cols > 1 && <path d={`M${x + w / cols} ${y}v${h}M${x + (w * (cols - 1)) / cols} ${y}v${h}`} />}
        <path d={`M${x + w / 2 - 1} ${y + 2}h2M${x + w / 2 - 1} ${y + h / 2}h2M${x + w / 2 - 1} ${y + h - 2}h2`} strokeWidth={1.5} />
    </g>
);

const thumbs: Record<string, ReactNode> = {
    "Chest_Drawers 3": chest(3, 3.5, 4.5, 25, 16),
    "Chest_Drawers 4": chest(3, 3.5, 6.5, 26, 12),
    "Chest_Drawers 5": chest(1, 9.5, 2.5, 11, 15),
    "Bed 150x200": (
        <g stroke="#a8c8f4" strokeWidth={1.3}>
            <path d="M5.500 3.500H27V28.500H5.500ZM7 5.500H25M7.500 10V5M25 10V5M16 6V10M7.500 10H25M5 14Q8 11 16 12Q24 11 27 14M5.500 18Q12 14 17 15L23 19V15" />
        </g>
    ),
    "Bed 85x205": <path d="M10.500 2.500H21.500V29H10.500ZM12.500 4H19.500V9H12.500ZM10 13Q15 10 21 12L17 15L10 15.500M12 27H20" stroke="#eee" />,
    "Bed 150 - Front and Side": <path d="M3 21V10.500H18.500V21M3 13H18M4 16H18M6 12H16M3 18.500H18" stroke="#ccc" />,
    "Bed 85 - Front and Side": <path d="M3 10.500H12.500V22H3ZM3 13H12M3 16H12M5 11H10" stroke="#999" strokeWidth={1} />,
    "Tap 01": <path d="M18 29V20H21V22" stroke="#999" strokeWidth={2} />,
    "Sink 1": <g><rect x="3" y="11" width="26" height="10" rx="1" fill="#fff" /><rect x="5" y="13" width="6" height="6" rx="2" fill="#000" /><rect x="13" y="13" width="6" height="6" rx="2" fill="#000" /><path d="M7 16.500H9M15 16.500H17" stroke="#fff" /></g>,
    "Sink 2": <g><rect x="3" y="9" width="26" height="14" fill="#fff" /><rect x="5" y="11" width="8" height="10" rx="2" fill="#000" /><circle cx="16" cy="16" r="2.500" fill="#000" /><path d="M20 12H26M20 15H26M20 18H26M8 17L11 14" stroke="#888" /></g>,
    "Sink 3": <g><rect x="3" y="9" width="26" height="15" rx="2" fill="#fff" /><rect x="5" y="11" width="11" height="11" rx="2" fill="#000" /><path d="M8 18L13 13V18ZM24 10H28" fill="#fff" stroke="#333" /></g>,
    "Industrial stove": <g><rect x="8" y="6" width="17" height="20" fill="#ccc" /><path d="M8 10H25M8 14H25M12 6V20M17 6V20M21 6V20" stroke="#444" /></g>,
};

function PaletteItem({ name }: { name: string }) {
    const selected = name === "Bed 150x200";
    return (
        <li className="h-[50px] shrink-0 border-b-2 border-[#1b1c1f] px-[5px] pt-[6px]">
            <button className={`flex h-[39px] w-full items-center gap-[6px] pl-[3px] ${selected ? "bg-[#646464] text-black" : ""}`}>
                <span className={selected ? "bg-[#0a1f45]" : "bg-black"}>
                    <Svg>
                        {thumbs[name]}
                        <path d="M27.500 19V27M24 21L31 25M31 21L24 25" stroke={selected ? "#c88650" : "#ff8c1a"} strokeWidth={1.300} />
                    </Svg>
                </span>
                {name}
            </button>
        </li>
    );
}

const divider = (
    <li className="flex h-[30px] shrink-0 items-center border-b-2 border-[#1b1c1f] pt-[2px] pr-[5px] pl-1">
        <div className="h-[2px] w-full bg-[#868686]" />
    </li>
);

function PaletteTitle({ name }: { name: string }) {
    return <li className="h-[30px] shrink-0 border-b-2 border-[#1b1c1f] pl-[5px] text-[15px] leading-8 font-bold text-white">{name}</li>;
}

const paletteTabs = [
    { name: "Openings", height: "h-[92px]" },
    { name: "Nature", height: "h-[75px]" },
    { name: "Kitchen Furn...", height: "h-[126px]" },
    { name: "Furniture", height: "h-[90px]" },
    { name: "Bathroom Fu...", height: "h-[128px]" },
    { name: "Exterior Furn...", height: "h-[127px]" },
];

function ToolPalettes() {
    return (
        <aside className="flex w-[425px] shrink-0 border border-black bg-[#343538]">
            <div className="flex min-w-0 flex-1 flex-col pt-[21px] pr-3 pb-[10px] pl-[11px]">
                <div className="flex h-[26px] shrink-0 items-center pl-[29px]">
                    <div className="relative">
                        <select aria-label="Palette group" className="h-[25px] w-[189px] appearance-none border border-black bg-[#141518] pl-[3px]">
                            <option>Architecture &amp; Interior D</option>
                        </select>
                        <div className="pointer-events-none absolute top-[11px] right-[6px]"><Caret /></div>
                    </div>
                    <button className="ml-[7px] flex h-[26px] w-[27px] items-center justify-center border border-[#1d1e21]" aria-label="Save palette">
                        <Svg w={21} h={21}>
                            <path d="M1 1H12L15 4V6H6V17H1Z" fill="#77787a" />
                            <path d="M6 5H16L20 9V20H6Z" fill={LG} />
                            <path d="M9 6H15V10H9ZM8 13H18V19H8Z" fill="#343538" />
                        </Svg>
                    </button>
                    <button className="ml-[10px] flex items-center gap-1" aria-label="Layout">
                        <Svg w={21} h={21}><path d="M1 1H20V20H1ZM1 3H20M1 5H20M4 9H9V14H4ZM12 9H17V14H12ZM4 17H9M12 17H17" stroke={LG} strokeWidth={1.6} /></Svg>
                        <Caret />
                    </button>
                    <button className="ml-[14px] flex items-center gap-[6px]" aria-label="Options"><FaCog size={18} color={LG} /><Caret /></button>
                    <button className="ml-[10px] h-[26px] w-[27px] border border-[#1d1e21] text-base font-bold">?</button>
                </div>
                <div className="mt-2 flex min-h-0 flex-1">
                    <div className="flex w-[27px] shrink-0 flex-col items-center pr-px">
                        <Svg w={20} h={3}><path d="M0 0H9L6 3H4ZM11 0H20L17 3H15Z" fill="#fff" /></Svg>
                        {paletteTabs.map((tab) => (
                            <button key={tab.name} className={`flex w-full items-center justify-center border-b border-l border-black text-white ${tab.height} ${tab.name === "Furniture" ? "bg-[#202124]" : ""}`}>
                                <span className="rotate-180 whitespace-nowrap [writing-mode:vertical-rl]">{tab.name}</span>
                            </button>
                        ))}
                        <button className="mt-[5px]" aria-label="Previous tab"><Svg w={13} h={7}><path d="M0 7H13L6.500 0Z" fill={LG} /></Svg></button>
                        <button className="mt-3" aria-label="Next tab"><Svg w={13} h={7}><path d="M0 0H13L6.500 7Z" fill={LG} /></Svg></button>
                    </div>
                    <div className="flex min-w-0 flex-1 border border-black bg-[#141518]">
                        <div className="min-w-0 flex-1 overflow-hidden border-r-2 border-[#1b1c1f]">
                            <ul className="-mt-[19px] flex flex-col">
                                <PaletteItem name="Chest_Drawers 3" />
                                <PaletteItem name="Chest_Drawers 4" />
                                <PaletteItem name="Chest_Drawers 5" />
                                {divider}
                                <PaletteTitle name="Beds" />
                                <PaletteItem name="Bed 150x200" />
                                <PaletteItem name="Bed 85x205" />
                                <PaletteItem name="Bed 150 - Front and Side" />
                                <PaletteItem name="Bed 85 - Front and Side" />
                                {divider}
                                <PaletteTitle name="Kitchen" />
                                <PaletteItem name="Tap 01" />
                                <PaletteItem name="Sink 1" />
                                <PaletteItem name="Sink 2" />
                                <PaletteItem name="Sink 3" />
                                <PaletteItem name="Industrial stove" />
                            </ul>
                        </div>
                        <div className="flex w-5 flex-col items-center pt-2 pb-2">
                            <Svg w={9} h={5}><path d="M0 5H9L4.500 0Z" fill="#fff" /></Svg>
                            <div className="flex-1" />
                            <div className="h-[136px] w-[18px] bg-[#343538]" />
                            <div className="h-[156px]" />
                            <Svg w={9} h={5}><path d="M0 0H9L4.500 5Z" fill="#fff" /></Svg>
                        </div>
                    </div>
                </div>
            </div>
            <div className="flex w-6 shrink-0 flex-col items-center border-l border-black bg-[#202124]">
                <button className="flex h-5 items-center" aria-label="Close"><X size={10} strokeWidth={4} color="#fff" /></button>
                <button className="mt-[9px]" aria-label="Pin"><Svg w={10} h={14}><path d="M1 0H9V2H8V6L10 8H0L2 6V2H1ZM4.500 8H5.500V14H4.500Z" fill={LG} /></Svg></button>
                <div className="flex-1" />
                <h2 className="rotate-180 text-[15px] leading-5 font-bold [writing-mode:vertical-rl]">Tool Palettes</h2>
                <div className="mt-3 mb-[2px]">
                    <Svg w={16} h={16}><path d="M1 2H4V11L2.500 14L1 11Z" fill={LG} /><FaCog x={6} y={1} size={9} color={OR} /><path d="M7 11V14M10 11V14M13 11V14M6 11H14" stroke={LG} /></Svg>
                </div>
            </div>
        </aside>
    );
}

const toolbar: [string, ReactNode][] = [
    ["Properties", <Svg w={20} h={20}><path d="M3 3H6V8H3ZM8 3H12V8H8ZM14 3H17V8H14Z" fill={LG} /><path d="M3 11H11M3 17H11" stroke={OR} /><path d="M3 14H11" stroke={LG} strokeDasharray="2 1" /><text x="12" y="18" fill={OR} fontSize="9" fontWeight="700" fontFamily="Liberation Mono">A</text></Svg>],
    ["Cloud", <Svg w={22} h={20}><path d="M2 15Q0 11 4 9Q6 9 6 8Q8 4 12 5Q15 6 15 9Q21 10 20 15Z" stroke={LG} /></Svg>],
    ["Comments", <Svg w={20} h={20}><path d="M6 4H14Q17 4 17 9Q17 13 12 13L10 16L9 13Q3 13 3 9Q3 4 6 4ZM6 7H14M6 10H13" stroke={LG} strokeWidth={1.2} /></Svg>],
    ["Compare", <Svg w={22} h={22}><path d="M8 19H1V5H6L10 9V12M6 5V9H10M9 5V2H14L18 6V12M14 2V6H18" stroke={LG} /><path d="M12 18H18" stroke={OR} /><path d="M14 15V21L11 18ZM17 15V21L20 18Z" fill={OR} /></Svg>],
    ["Layers", <Svg w={20} h={20}><path d="M4 6L11 3L16 5L9 8ZM4 9L9 11L16 8L14 7M4 9L6 8M4 12L9 14L16 11L14 10M4 12L6 11M4 15L9 17L16 14L14 13M4 15L6 14" stroke={OR} strokeWidth={1.2} /></Svg>],
    ["Notifications", <Svg w={22} h={24}><path d="M1 19H21L18 14V10Q17 3 11 3Q5 3 4 10V14Z" stroke={LG} /><path d="M8 22H14" stroke={OR} strokeWidth={1.6} /></Svg>],
    ["Chat", <Svg w={20} h={20}><path d="M8 2H18V9H14L12 12V9H8Z" stroke={OR} /><path d="M10 5.500H16" stroke={OR} strokeDasharray="1 1" /><path d="M4 11H7V14L9 16V18H2V16L4 14Z" fill={LG} /></Svg>],
    ["Attach", <Svg w={20} h={20}><path d="M5 4H3V18H10M9 4H12L16 8V11M12 4V8H16" stroke={LG} /><path d="M6 8V3Q7 0 8 3V8" stroke={OR} /><FaCog x={11} y={13} size={7} color={OR} /></Svg>],
    ["Files", <Svg w={20} h={20}><path d="M2 17V3H7L9 5H13V7M2 17L6 11H18L15 17Z" stroke={LG} /><path d="M4 8H15V10M6 6H13" stroke={OR} /></Svg>],
    ["Calculator", <Svg w={18} h={20}><rect x="2" y="1" width="14" height="18" stroke={LG} /><path d="M4 3H14V6H4ZM4 8H7V11H4ZM8 8H10V11H8ZM11 8H14V11H11ZM4 12H7V14H4ZM8 12H10V14H8ZM11 12H14V14H11ZM4 15H7V17H4ZM8 15H10V17H8ZM11 15H14V17H11Z" fill={OR} /></Svg>],
    ["Tool Palettes", <Svg w={22} h={22}><path d="M2 2H7V15L4.500 20L2 15Z" fill={LG} /><FaCog x={9} y={1} size={13} color={OR} /><path d="M10 15V19M13 15V19M16 15V19M19 15V19M9 15H21" stroke={LG} strokeWidth={2} /></Svg>],
    ["Assistant", <Svg w={22} h={20}><rect x="4" y="4" width="14" height="10" rx="3" stroke={LG} strokeWidth={2} /><path d="M8 8H9V10H8ZM13 8H14V10H13ZM10 14H14L13 18Z" fill={LG} stroke={LG} /><path d="M1 6V12M21 6V12" stroke={OR} strokeWidth={2} /></Svg>],
    ["Trinity", <Svg w={20} h={22}><path d="M6 6Q6 12 13 14M13 9V21" stroke={LG} /><circle cx="6" cy="4" r="2.500" stroke={OR} /><circle cx="13" cy="7" r="2.500" stroke={OR} /></Svg>],
    ["Blocks", <Svg w={22} h={22}><path d="M6 19H1V1H19V9M5 15V6H8V10H5" stroke={LG} strokeWidth={1.8} /><circle cx="14" cy="7" r="3" fill={LG} /><path d="M10 21V12H14L16 14H20M10 21L13 16H22L19 21Z" stroke={OR} strokeWidth={1.8} /></Svg>],
    ["Attributes", <Svg w={22} h={24}><path d="M2 1V23M6 13V23M2 8H5M6 18H9" stroke={OR} /><path d="M6 3H17V11H6ZM10 13H21V21H10Z" stroke={LG} /><path d="M9 9V6H11V9M13 6H15M13 19V16H15V19M17 16H19" stroke={LG} /></Svg>],
];

function SideToolbar() {
    return (
        <div className="ml-[2px] w-[32px] shrink-0 bg-[#343538]">
            {toolbar.map(([name, icon]) => (
                <button key={name} aria-label={name} className={`flex h-[33px] w-full items-center justify-center border-b border-l border-black ${name === "Tool Palettes" ? "bg-[#202124]" : ""}`}>
                    {icon}
                </button>
            ))}
        </div>
    );
}

/* ---------- bottom ---------- */

function CommandWindow() {
    return (
        <section className="shrink-0 border-t border-l border-black">
            <div className="flex h-[25px] items-center justify-between bg-[#202124] pr-2 pb-[2px] pl-[3px]">
                <h2 className="text-[15px] leading-6 font-bold">Command Window</h2>
                <div className="flex gap-[14px]">
                    <button aria-label="Float"><Svg w={10} h={10}><path d="M1 4H6V9H1ZM3 4V1H9V6H6" stroke="#fff" /></Svg></button>
                    <button aria-label="Close"><Svg w={9} h={9}><path d="M1 1L8 8M8 1L1 8" stroke="#fff" strokeWidth={1.6} /></Svg></button>
                </div>
            </div>
            <div className="flex h-[65px] justify-between border-y border-black bg-[#141518] font-['Liberation_Sans',sans-serif] text-[17px] leading-5 text-[#d8d8d8]">
                <div className="-mt-px pl-1">
                    <p className="font-bold">Stretch point»</p>
                    <p>: Specify opposite corner:«Cancel»</p>
                    <p>: Specify opposite corner:«Cancel»</p>
                </div>
                <div className="flex w-5 flex-col items-center py-[7px]">
                    <Svg w={9} h={5}><path d="M0 5H9L4.500 0Z" fill="#fff" /></Svg>
                    <div className="flex-1" />
                    <div className="h-3 w-[18px] bg-[#343538]" />
                    <div className="h-[11px]" />
                    <Svg w={9} h={5}><path d="M0 0H9L4.500 5Z" fill="#fff" /></Svg>
                </div>
            </div>
            <input aria-label="Command" defaultValue=":" className="block h-5 w-full bg-[#141518] pl-1 font-['Liberation_Sans',sans-serif] text-base" />
        </section>
    );
}

const toggles = [
    { name: "Snap", width: "w-[48px]", on: false },
    { name: "Grid", width: "w-[43px]", on: false },
    { name: "Ortho", width: "w-[54px]", on: true },
    { name: "Polar", width: "w-[50px]", on: false },
    { name: "ESnap", width: "w-[56px]", on: true },
    { name: "ETrack", width: "w-[57px]", on: false },
    { name: "QInput", width: "w-[62px]", on: true },
    { name: "Cycling Selection", width: "w-[128px]", on: true },
    { name: "LWeight", width: "w-[69px]", on: false },
    { name: "MODEL", width: "w-[65px]", on: true },
    { name: "Dynamic CCS", width: "w-[103px]", on: false },
    { name: "AMonitor", width: "w-[79px]", on: false },
];

function StatusBar() {
    return (
        <footer className="flex h-[34px] shrink-0 items-center bg-[#343538] pr-[6px] pl-[2px]">
            <span className="w-[392px]">ARES Commander 2025 x64</span>
            <div className="flex gap-[7px]">
                {toggles.map((t) => (
                    <button key={t.name} className={`h-[26px] border border-[#18191b] whitespace-nowrap ${t.width} ${t.on ? "bg-[#202124]" : ""}`}>{t.name}</button>
                ))}
                <div className="relative">
                    <select aria-label="Annotation scale" className="h-[26px] w-[114px] appearance-none border border-[#18191b] bg-[#343538] pl-1">
                        <option>Annotation</option>
                    </select>
                    <div className="pointer-events-none absolute top-[10px] right-[7px]">
                        <Svg w={10} h={6}><path d="M0 0H10L5 6Z" fill="#ddd" /></Svg>
                    </div>
                </div>
            </div>
            <span className="ml-2">(1:100)</span>
            <span className="ml-[10px] flex-1">(93.25,26.05,0.00)</span>
            <div className="flex items-center gap-3">
                <button aria-label="Location"><Svg w={16} h={18}><path d="M7 17L2 9Q0 1 7 1Q14 1 12 9Z" fill="#e2e2e2" /><circle cx="7" cy="6" r="2.500" fill="#343538" /><path d="M10 12L15 17M15 12L10 17" stroke={OR} /></Svg></button>
                <button aria-label="Coordinate system"><Svg w={18} h={18}><path d="M2 5V2H5M2 13V16H5M14 2H17V5" stroke={LG} /><circle cx="9" cy="7" r="2.500" stroke={LG} /><path d="M5 13Q6 10 9 10Q12 10 13 13" stroke={LG} /><path d="M11 17L17 11M11 11L17 17M13 5L17 1" stroke={OR} strokeWidth={1.6} /></Svg></button>
            </div>
        </footer>
    );
}

export default function App() {
    return (
        <div className="flex h-screen min-h-[1080px] bg-[#202124] font-['Noto_Sans','Open_Sans',sans-serif] text-sm text-[#d0d0d0]">
            <div className="w-[2px] shrink-0 bg-linear-to-b from-[#35180f] to-[#3a1640]" />
            <div className="flex min-w-0 flex-1 flex-col">
                <TitleBar />
                <Ribbon />
                <div className="mt-[2px] flex min-h-0 flex-1">
                    <NavigatorPanel />
                    <Documents />
                    <div className="w-[5px] shrink-0 bg-[#2a2b2e]" />
                    <ToolPalettes />
                    <SideToolbar />
                </div>
                <div className="h-1 shrink-0 bg-[#2a2b2e]" />
                <CommandWindow />
                <StatusBar />
            </div>
        </div>
    );
}
